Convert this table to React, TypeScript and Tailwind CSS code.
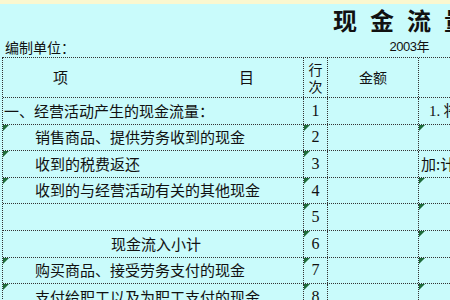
import React from "react";

const cjk = { fontFamily: '"Noto Sans CJK SC", "Noto Sans", sans-serif' };
const serif = { fontFamily: '"Liberation Serif", "Noto Sans CJK SC", serif' };

function Tri() {
  return (
    <svg className="absolute left-0 top-0" width="6" height="6" viewBox="0 0 6 6">
      <polygon points="0,0 6,0 0,6" fill="#1f6b3a" />
    </svg>
  );
}

type Row = {
  label: string;
  indent: string;
  num: string;
  right?: string;
  g1: boolean;
  g2: boolean;
  g4: boolean;
};

const rows: Row[] = [
  { label: "一、经营活动产生的现金流量：", indent: "pl-[1px]", num: "1", right: "1. 将净利润调节为经营活动现金流量", g1: false, g2: false, g4: false },
  { label: "销售商品、提供劳务收到的现金", indent: "pl-[32px]", num: "2", g1: true, g2: true, g4: true },
  { label: "收到的税费返还", indent: "pl-[32px]", num: "3", right: "加:计提的资产减值准备", g1: true, g2: true, g4: false },
  { label: "收到的与经营活动有关的其他现金", indent: "pl-[32px]", num: "4", g1: true, g2: true, g4: true },
  { label: "", indent: "pl-[32px]", num: "5", g1: false, g2: true, g4: true },
  { label: "现金流入小计", indent: "pl-[108px]", num: "6", g1: false, g2: true, g4: true },
  { label: "购买商品、接受劳务支付的现金", indent: "pl-[32px]", num: "7", g1: true, g2: true, g4: true },
  { label: "支付给职工以及为职工支付的现金", indent: "pl-[32px]", num: "8", g1: true, g2: true, g4: true },
];

export default function App() {
  return (
    <div className="w-[450px] h-[300px] overflow-hidden bg-[#c9fbfb] text-[#111]" style={cjk}>
      <div className="h-[4px] bg-[#fbf7cf]" />
      <div className="h-[32px] flex items-center pl-[333px] gap-[13px] text-[24px] font-bold leading-none whitespace-nowrap">
        <span>现</span>
        <span>金</span>
        <span>流</span>
        <span>量</span>
        <span>表</span>
      </div>
      <div className="h-[21px] flex items-center justify-between text-[14px] leading-none pl-[5px] whitespace-nowrap">
        <span>编制单位：</span>
        <span className="mr-[21px] text-[13px] tracking-[-0.5px]" style={{ fontFamily: '"Liberation Sans", "Noto Sans CJK SC", sans-serif' }}>2003年</span>
      </div>
      <div className="ml-[2px] border-l border-t border-dotted border-[#333]">
        <div className="flex h-[40px] border-b border-dotted border-[#333] text-[15px]">
          <div className="w-[301px] border-r border-dotted border-[#333] flex items-center justify-between pl-[50px] pr-[49px]">
            <span>项</span>
            <span>目</span>
          </div>
          <div className="w-[24px] border-r border-dotted border-[#333] flex flex-col items-center justify-center text-[14px]">
            <span className="block leading-[17px]">行</span>
            <span className="block leading-[17px]">次</span>
          </div>
          <div className="w-[91px] border-r border-dotted border-[#333] flex items-center justify-center text-[14px]">
            金额
          </div>
          <div className="flex-1" />
        </div>
        {rows.map((r, i) => (
          <div key={i} className="flex h-[26.6px] border-b border-dotted border-[#333] text-[15px] whitespace-nowrap">
            <div className={`relative w-[301px] border-r border-dotted border-[#333] flex items-center overflow-hidden ${r.indent}`}>
              {r.g1 && <Tri />}
              <span>{r.label}</span>
            </div>
            <div className="relative w-[24px] border-r border-dotted border-[#333] flex items-center justify-center text-[16px]" style={serif}>
              {r.g2 && <Tri />}
              {r.num}
            </div>
            <div className="w-[91px] border-r border-dotted border-[#333]" />
            <div className="relative flex-1 flex items-center overflow-hidden pl-[2px] text-[15px]">
              {r.g4 && <Tri />}
              {r.right && (
                <span className={r.right.startsWith("1") ? "pl-[8px]" : ""}>
                  {r.right.startsWith("1") ? <span style={serif}>1.</span> : null}
                  {r.right.startsWith("1") ? " 将净利润调节为经营活动现金流量" : r.right}
                </span>
              )}
            </div>
          </div>
        ))}
      </div>
    </div>
  );
}
